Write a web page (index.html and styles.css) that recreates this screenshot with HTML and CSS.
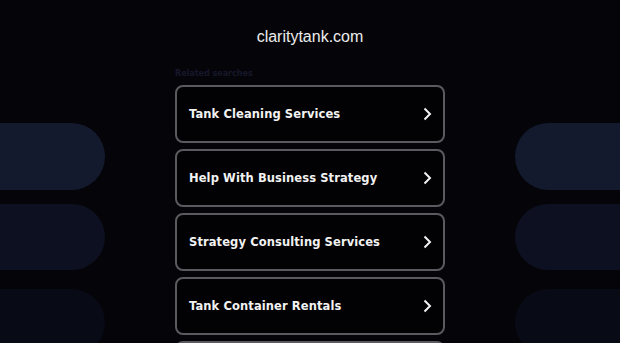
FILE: index.html
```html
<!DOCTYPE html>
<html lang="en">
<head>
    <meta charset="UTF-8">
    <meta name="viewport" content="width=device-width, initial-scale=1.0">
    <title>claritytank.com</title>
    <link rel="stylesheet" href="styles.css">
</head>
<body>
    <div class="page">
        <div class="side left">
            <div class="pill p1"></div>
            <div class="pill p2"></div>
            <div class="pill p3"></div>
        </div>

        <div class="main">
            <h1 class="domain">claritytank.com</h1>
            <div class="related">Related searches</div>
            <div class="links">
                <a class="card" href="#"><span>Tank Cleaning Services</span><svg class="arrow" viewBox="0 0 10 16"><path d="M2.5 2.5 L8 8 L2.5 13.5"/></svg></a>
                <a class="card" href="#"><span>Help With Business Strategy</span><svg class="arrow" viewBox="0 0 10 16"><path d="M2.5 2.5 L8 8 L2.5 13.5"/></svg></a>
                <a class="card" href="#"><span>Strategy Consulting Services</span><svg class="arrow" viewBox="0 0 10 16"><path d="M2.5 2.5 L8 8 L2.5 13.5"/></svg></a>
                <a class="card" href="#"><span>Tank Container Rentals</span><svg class="arrow" viewBox="0 0 10 16"><path d="M2.5 2.5 L8 8 L2.5 13.5"/></svg></a>
                <a class="card" href="#"><span></span><svg class="arrow" viewBox="0 0 10 16"><path d="M2.5 2.5 L8 8 L2.5 13.5"/></svg></a>
            </div>
        </div>

        <div class="side right">
            <div class="pill p1"></div>
            <div class="pill p2"></div>
            <div class="pill p3"></div>
        </div>
    </div>
</body>
</html>
```

FILE: styles.css
```css
body{
    margin: 0;
    background-color: #050509;
    overflow: hidden;
}

.page{
    display: flex;
    justify-content: space-between;
    width: 620px;
    height: 343px;
    overflow: hidden;
}

.side{
    width: 105px;
    display: flex;
    flex-direction: column;
    padding-top: 123px;
}

.pill{
    height: 67px;
    flex-shrink: 0;
}
.left .pill{
    border-radius: 0 34px 34px 0;
}
.right .pill{
    border-radius: 34px 0 0 34px;
}
.p1{
    background-color: #141a2e;
}
.p2{
    margin-top: 14px;
    height: 66px;
    background-color: #0d1021;
}
.p3{
    margin-top: 19px;
    background-color: #080a15;
}

.main{
    width: 270px;
    display: flex;
    flex-direction: column;
}

.domain{
    margin: 27px 0 0 0;
    height: 20px;
    line-height: 20px;
    font-family: 'Liberation Sans', Arial, sans-serif;
    font-size: 16px;
    font-weight: normal;
    color: #ececec;
    text-align: center;
}

.related{
    margin-top: 22px;
    height: 10px;
    line-height: 10px;
    font-family: 'DejaVu Sans', sans-serif;
    font-size: 8px;
    font-weight: bold;
    color: #17172a;
}

.links{
    margin-top: 6px;
    display: flex;
    flex-direction: column;
    gap: 6px;
}

.card{
    box-sizing: border-box;
    height: 58px;
    flex-shrink: 0;
    display: flex;
    align-items: center;
    justify-content: space-between;
    padding: 0 11px 0 12px;
    border: 2px solid #5a5a5f;
    border-radius: 8px;
    background-color: #020204;
    text-decoration: none;
    color: #f2f2f2;
    font-family: 'DejaVu Sans', sans-serif;
    font-size: 11.5px;
    font-weight: bold;
    letter-spacing: 0.1px;
}

.arrow{
    width: 10px;
    height: 16px;
    fill: none;
    stroke: #f2f2f2;
    stroke-width: 2;
}
```
